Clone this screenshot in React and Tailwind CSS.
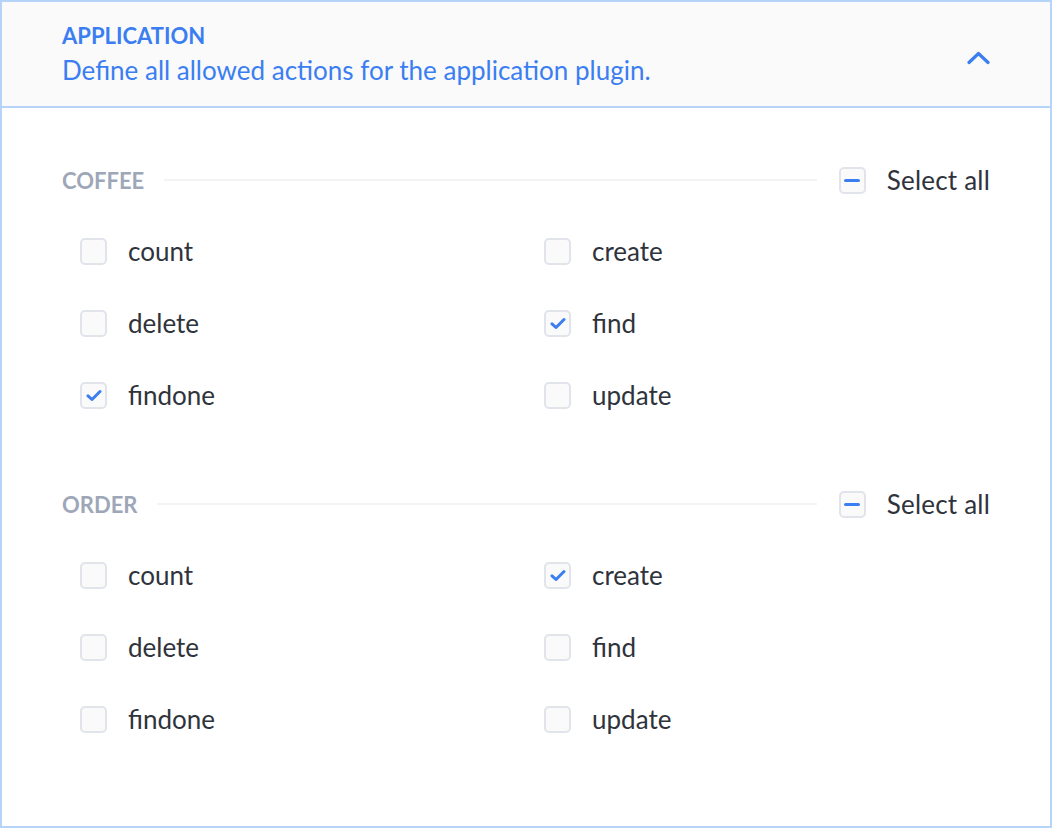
import React, { useState } from 'react';

const sections = [
    { id: 'coffee', label: 'COFFEE', checked: ['find', 'findone'] },
    { id: 'order', label: 'ORDER', checked: ['create'] },
];

const actions = ['count', 'create', 'delete', 'find', 'findone', 'update'];

function Box({ state }) {
    return (
        <span className="flex h-[27px] w-[27px] shrink-0 items-center justify-center rounded-[5px] border-2 border-[#e1e4ea] bg-[#fafafb]">
            {state === 'checked' && (
                <svg width="16" height="13" viewBox="0 0 16 13" fill="none">
                    <path d="M2 6.8 L6 10.5 L14 2.5" stroke="#3b7ef2" strokeWidth="3" strokeLinecap="round" strokeLinejoin="round" />
                </svg>
            )}
            {state === 'partial' && <span className="block h-[3px] w-[16px] rounded-full bg-[#3b7ef2]" />}
        </span>
    );
}

function Section({ section }) {
    const [checked, setChecked] = useState(section.checked);
    const toggle = (a) => setChecked(c => (c.includes(a) ? c.filter(x => x !== a) : [...c, a]));

    return (
        <div>
            <div className="flex h-[28px] items-center">
                <span className="text-[22px] font-bold text-[#9ea7b8]">{section.label}</span>
                <div className="ml-5 mr-[22px] h-[2px] flex-1 bg-[#f3f4f6]"></div>
                <Box state={checked.length === actions.length ? 'checked' : checked.length ? 'partial' : 'none'} />
                <span className="ml-[21px] text-[26px] tracking-[0.2px] text-[#2f333b]">Select all</span>
            </div>
            <div className="mt-[21px] grid grid-cols-[464px_1fr] pl-[18px]">
                {actions.map(a => (
                    <label key={a} onClick={() => toggle(a)} className="flex h-[72px] cursor-pointer items-center gap-[21px]">
                        <Box state={checked.includes(a) ? 'checked' : 'none'} />
                        <span className="text-[26px] text-[#2f333b]">{a}</span>
                    </label>
                ))}
            </div>
        </div>
    );
}

export default function App() {
    const [open, setOpen] = useState(true);

    return (
        <div className="h-[830px] w-[1054px] bg-white" style={{ fontFamily: 'Lato, "Open Sans", sans-serif' }}>
            <div className="h-[828px] w-[1052px] border-2 border-[#b6d3f8]">
                {/* Header */}
                <div className="flex h-[106px] items-center justify-between border-b-2 border-[#b6d3f8] bg-[#fafafb] px-[60px]">
                    <div className="flex flex-col">
                        <span className="text-[22px] font-bold leading-[28px] text-[#3b7ef2]">APPLICATION</span>
                        <span className="mt-[4px] text-[26px] leading-[32px] text-[#3b7ef2]">Define all allowed actions for the application plugin.</span>
                    </div>
                    <button onClick={() => setOpen(!open)} className="mt-2 flex items-center justify-center">
                        <svg width="23" height="14" viewBox="0 0 23 14" fill="none">
                            <path d="M2 11.5 L11.5 2.5 L21 11.5" stroke="#3b7ef2" strokeWidth="3.2" strokeLinecap="round" strokeLinejoin="round" />
                        </svg>
                    </button>
                </div>

                {/* Body */}
                {open && (
                    <div className="flex flex-col gap-[59px] px-[60px] pt-[58px]">
                        {sections.map(s => <Section key={s.id} section={s} />)}
                    </div>
                )}
            </div>
        </div>
    );
}
